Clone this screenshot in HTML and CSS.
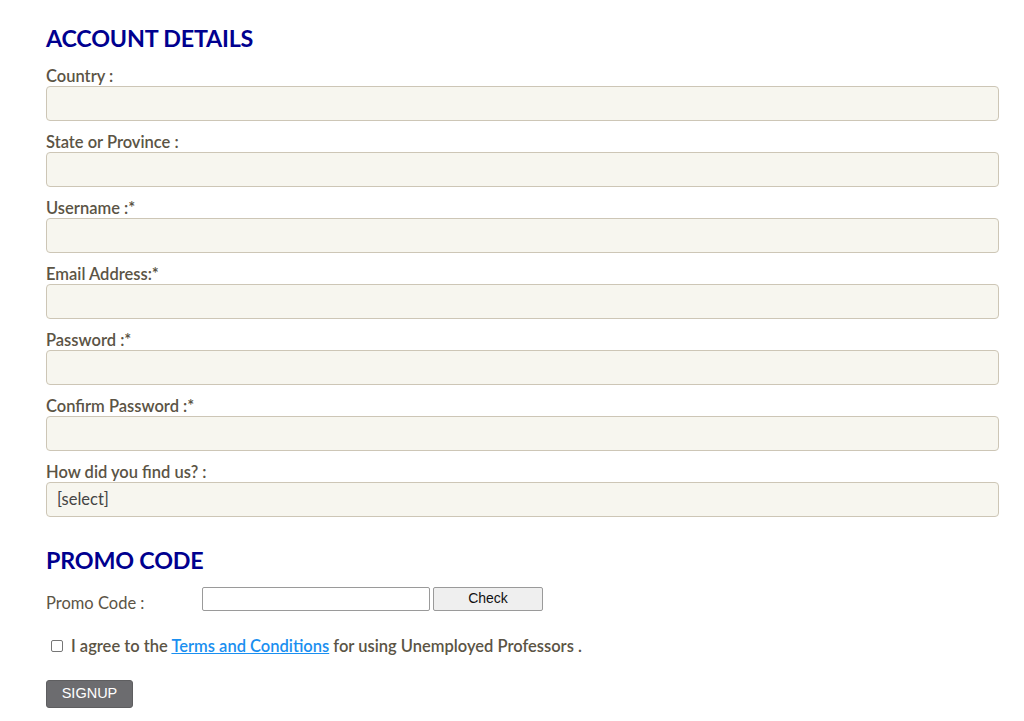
FILE: index.html
```html
<!DOCTYPE html>
<html>
<head>
<meta charset="utf-8">
<link rel="stylesheet" href="styles.css">
</head>
<body>
<div class="page">
  <h2 class="section-title">ACCOUNT DETAILS</h2>
  <div class="field"><label class="field-label">Country :</label><div class="input"></div></div>
  <div class="field"><label class="field-label">State or Province :</label><div class="input"></div></div>
  <div class="field"><label class="field-label">Username :*</label><div class="input"></div></div>
  <div class="field"><label class="field-label">Email Address:*</label><div class="input"></div></div>
  <div class="field"><label class="field-label">Password :*</label><div class="input"></div></div>
  <div class="field"><label class="field-label">Confirm Password :*</label><div class="input"></div></div>
  <div class="field"><label class="field-label">How did you find us? :</label><div class="input select">[select]</div></div>

  <h2 class="section-title promo-title">PROMO CODE</h2>
  <div class="promo-row">
    <span class="promo-label">Promo Code :</span>
    <div class="promo-input"></div>
    <button class="check-btn">Check</button>
  </div>
  <div class="agree-row">
    <span class="checkbox"></span>
    <span class="agree-text">I agree to the <a class="terms" href="#">Terms and Conditions</a> for using Unemployed Professors .</span>
  </div>
  <button class="signup-btn">SIGNUP</button>
</div>
</body>
</html>
```
FILE: styles.css
```css
* { box-sizing: border-box; }
body {
  margin: 0;
  background: #fff;
  font-family: Lato, "Open Sans", sans-serif;
}
.page {
  padding: 24px 25px 0 46px;
  width: 1024px;
}
.section-title {
  margin: 0 0 14px;
  font-size: 23.3px;
  line-height: 28px;
  font-weight: 700;
  color: #00008f;
  letter-spacing: -0.2px;
}
.promo-title { margin-top: 29px; margin-bottom: 13px; }
.field { margin-bottom: 11px; }
.field-label {
  display: block;
  font-size: 16.5px;
  line-height: 18px;
  font-weight: 600;
  color: #5b5445;
  padding-top: 1px;
  margin-bottom: 1px;
}
.input {
  height: 35px;
  width: 953px;
  background: #f7f6ef;
  border: 1px solid #cdc6b6;
  border-radius: 4px;
}
.select {
  padding-left: 10px;
  font-size: 16.5px;
  line-height: 33px;
  color: #444;
}
.promo-row {
  display: flex;
  align-items: center;
  height: 24px;
}
.promo-label {
  width: 156px;
  font-size: 16.5px;
  color: #5b5445;
  padding-top: 7px;
}
.promo-input {
  width: 228px;
  height: 24px;
  border: 1px solid #9a9a9a;
  border-radius: 2px;
  background: #fff;
}
.check-btn {
  margin-left: 3px;
  width: 110px;
  height: 24px;
  background: #efefef;
  border: 1px solid #9a9a9a;
  border-radius: 2px;
  font-family: "Liberation Sans", Arial, sans-serif;
  font-size: 14px;
  color: #111;
  padding: 0 0 2px;
}
.agree-row {
  display: flex;
  align-items: center;
  margin-top: 25px;
  height: 20px;
  padding-left: 5px;
}
.checkbox {
  width: 12px;
  height: 12px;
  border: 1px solid #767676;
  border-radius: 2px;
  margin-right: 8px;
}
.agree-text {
  font-size: 16.5px;
  font-weight: 600;
  color: #5b5445;
}
.terms {
  color: #1a8ff0;
  text-decoration: underline;
}
.signup-btn {
  margin-top: 24px;
  width: 87px;
  height: 28px;
  background: #6c6c6f;
  color: #fff;
  border: 1px solid #5e5e60;
  border-radius: 3px;
  font-family: "Liberation Sans", Arial, sans-serif;
  font-size: 14.5px;
  padding: 0 0 2px;
}
```
